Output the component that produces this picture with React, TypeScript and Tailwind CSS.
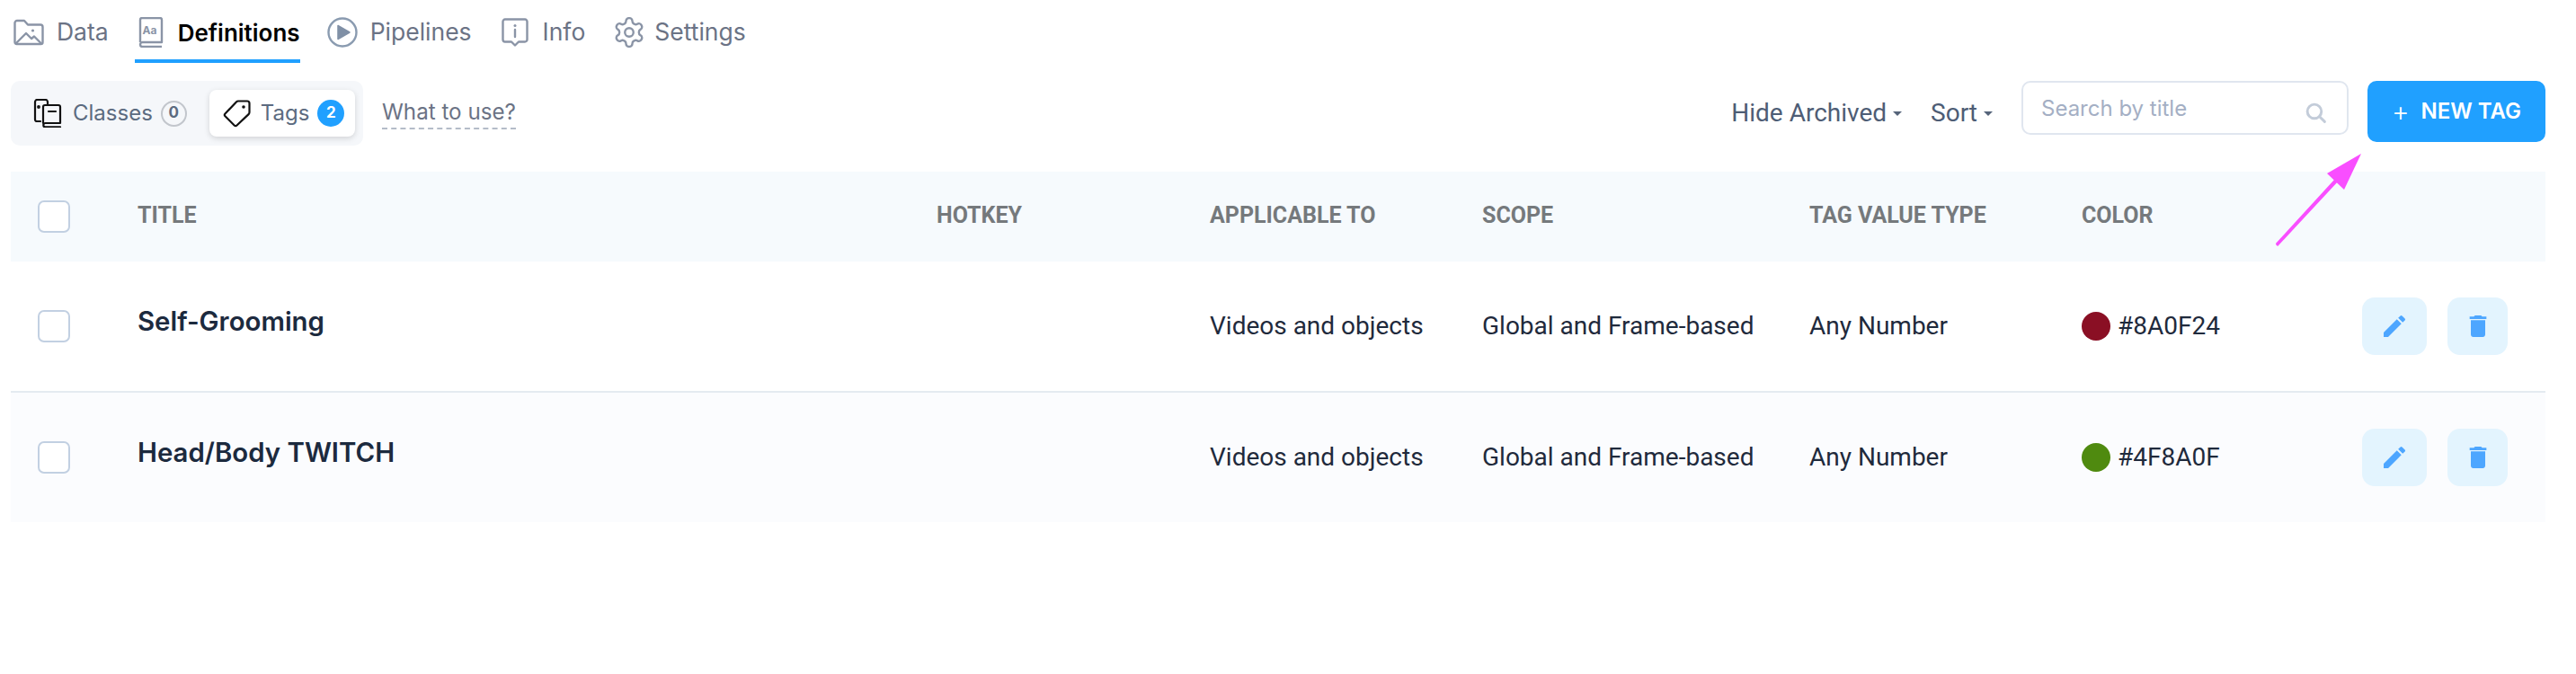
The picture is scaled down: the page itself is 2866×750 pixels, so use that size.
import React from "react";

const DataIcon = () => (
  <svg width="34" height="30" viewBox="0 0 34 30" fill="none" stroke="#8a94a6" strokeWidth="2.4" strokeLinejoin="round" strokeLinecap="round">
    <path d="M1.5 26V4.5a2.5 2.5 0 0 1 2.5-2.5h8l4 4.5h14a2.5 2.5 0 0 1 2.5 2.5V26a2 2 0 0 1-2 2H3.5a2 2 0 0 1-2-2Z" />
    <path d="M3 27l11-11 6 6 3-2.5 7 7" />
    <circle cx="21.5" cy="13" r="1.6" fill="#8a94a6" stroke="none" />
  </svg>
);
const BookIcon = () => (
  <svg width="28" height="34" viewBox="0 0 28 34" fill="none" stroke="#8a94a6" strokeWidth="2.4" strokeLinejoin="round">
    <path d="M2 28V3a2 2 0 0 1 2-2h20a2 2 0 0 1 2 2v25H4.5a2.5 2.5 0 0 0 0 5H26" />
    <text x="4.5" y="19" fontFamily="Inter, sans-serif" fontSize="12" fontWeight="700" fill="#8a94a6" stroke="none">Aa</text>
  </svg>
);
const PlayIcon = () => (
  <svg width="34" height="34" viewBox="0 0 34 34" fill="none">
    <circle cx="17" cy="17" r="15.5" stroke="#8a9bb0" strokeWidth="2.4" />
    <path d="M12 9.5 25 17 12 24.5Z" fill="#8090a6" stroke="#8090a6" strokeWidth="1.5" strokeLinejoin="round" />
  </svg>
);
const InfoIcon = () => (
  <svg width="30" height="32" viewBox="0 0 30 32" fill="none" stroke="#8a94a6" strokeWidth="2.4" strokeLinejoin="round">
    <path d="M4 1.5h22a2.5 2.5 0 0 1 2.5 2.5v20a2.5 2.5 0 0 1-2.5 2.5h-7L15 30.5 11 26.5H4A2.5 2.5 0 0 1 1.5 24V4A2.5 2.5 0 0 1 4 1.5Z" />
    <path d="M15 13v8" strokeLinecap="round" />
    <circle cx="15" cy="8.5" r="1.5" fill="#8a94a6" stroke="none" />
  </svg>
);
const GearIcon = () => (
  <svg width="38" height="38" viewBox="0 0 24 24" fill="none" stroke="#8a94a6" strokeWidth="1.5" strokeLinejoin="round" strokeLinecap="round">
    <path d="M12.22 2h-.44a2 2 0 0 0-2 2v.18a2 2 0 0 1-1 1.73l-.43.25a2 2 0 0 1-2 0l-.15-.08a2 2 0 0 0-2.73.73l-.22.38a2 2 0 0 0 .73 2.73l.15.1a2 2 0 0 1 1 1.72v.51a2 2 0 0 1-1 1.74l-.15.09a2 2 0 0 0-.73 2.73l.22.38a2 2 0 0 0 2.73.73l.15-.08a2 2 0 0 1 2 0l.43.25a2 2 0 0 1 1 1.73V20a2 2 0 0 0 2 2h.44a2 2 0 0 0 2-2v-.18a2 2 0 0 1 1-1.73l.43-.25a2 2 0 0 1 2 0l.15.08a2 2 0 0 0 2.73-.73l.22-.39a2 2 0 0 0-.73-2.73l-.15-.08a2 2 0 0 1-1-1.74v-.5a2 2 0 0 1 1-1.74l.15-.09a2 2 0 0 0 .73-2.73l-.22-.38a2 2 0 0 0-2.73-.73l-.15.08a2 2 0 0 1-2 0l-.43-.25a2 2 0 0 1-1-1.73V4a2 2 0 0 0-2-2Z" />
    <circle cx="12" cy="12" r="3" />
  </svg>
);
const ClassesIcon = () => (
  <svg width="32" height="32" viewBox="0 0 32 32" fill="none" stroke="#111" strokeWidth="2.2" strokeLinejoin="round" strokeLinecap="round">
    <path d="M8 25H4a2 2 0 0 1-2-2V3.5A2.5 2.5 0 0 1 4.5 1h9A2.5 2.5 0 0 1 16 3.5V6" />
    <path d="M11 27V9a2 2 0 0 1 2-2h15a2 2 0 0 1 2 2v18H13.5a2.2 2.2 0 0 0 0 4.4H30" />
    <path d="M17 14h8" />
    <circle cx="6" cy="9" r="0.8" fill="#111" />
  </svg>
);
const TagIcon = () => (
  <svg width="32" height="32" viewBox="0 0 32 32" fill="none" stroke="#111" strokeWidth="2.2" strokeLinejoin="round">
    <path d="M17 2.5h10a2.5 2.5 0 0 1 2.5 2.5v10a3 3 0 0 1-.9 2.1L15.5 29.5a2 2 0 0 1-2.8 0L2.5 19.3a2 2 0 0 1 0-2.8L14.9 3.4A3 3 0 0 1 17 2.5Z" />
    <circle cx="23" cy="9" r="1.8" fill="#111" stroke="none" />
  </svg>
);
const SearchIcon = () => (
  <svg width="25" height="25" viewBox="0 0 24 24" fill="none" stroke="#c3ccd9" strokeWidth="2.8" strokeLinecap="round">
    <circle cx="10.5" cy="10.5" r="7.5" />
    <path d="M16 16l5.5 5.5" />
  </svg>
);
const PencilIcon = () => (
  <svg width="32" height="32" viewBox="0 0 24 24" fill="#4da6ff">
    <path d="M3 17.25V21h3.75L17.81 9.94l-3.75-3.75L3 17.25zM20.71 7.04a1 1 0 0 0 0-1.41l-2.34-2.34a1 1 0 0 0-1.41 0l-1.83 1.83 3.75 3.75 1.83-1.83z" />
  </svg>
);
const TrashIcon = () => (
  <svg width="32" height="32" viewBox="0 0 24 24" fill="#4da6ff">
    <path d="M6 19c0 1.1.9 2 2 2h8c1.1 0 2-.9 2-2V7H6v12zM19 4h-3.5l-1-1h-5l-1 1H5v2h14V4z" />
  </svg>
);
const Caret = () => (
  <span className="ml-[7px] inline-block w-0 h-0 border-x-[5px] border-x-transparent border-t-[5px] border-t-[#56647a]" />
);

const Tab = ({ icon, label, active, gap }: { icon: React.ReactNode; label: string; active?: boolean; gap: string }) => (
  <div className={`flex h-[70px] items-center pt-[6px] border-b-4 ${gap} ${active ? "border-[#20a0ff]" : "border-transparent"}`}>
    {icon}
    <span className={active ? "text-[26px] font-semibold text-black" : "text-[26.5px] text-[#6b7385]"}>{label}</span>
  </div>
);

const Checkbox = () => <div className="h-[36px] w-[36px] rounded-[7px] border-2 border-[#c2d0e2] bg-white" />;

const gridCols = "grid grid-cols-[141px_889px_304px_303px_364px_303px_1fr] items-center";

const Head = ({ children }: { children?: React.ReactNode }) => (
  <div className="-mt-[2px] text-[25px] font-bold text-[#75797c] font-['Roboto',sans-serif]">{children}</div>
);

const Cell = ({ children }: { children: React.ReactNode }) => (
  <div className="text-[28px] text-[#1f2a3c] font-['Roboto',sans-serif]">{children}</div>
);

const Row = ({ title, dot, hex, bg }: { title: string; dot: string; hex: string; bg: string }) => (
  <div className={`${gridCols} h-[144px] ${bg}`}>
    <div className="pl-[30px]"><Checkbox /></div>
    <div className="-mt-[10px] text-[29.4px] font-semibold text-[#1c2a3e]">{title}</div>
    <div />
    <Cell>Videos and objects</Cell>
    <Cell>Global and Frame-based</Cell>
    <Cell>Any Number</Cell>
    <div className="flex items-center justify-between pr-[42px]">
      <div className="flex items-center gap-[8px]">
        <span className={`h-[32px] w-[32px] rounded-full ${dot}`} />
        <Cell>{hex}</Cell>
      </div>
      <div className="flex items-center gap-[23px]">
        <div className="flex h-[64px] w-[72px] items-center justify-center rounded-[14px] bg-[#e3f4fe]"><PencilIcon /></div>
        <div className="flex h-[64px] w-[67px] items-center justify-center rounded-[14px] bg-[#e3f4fe]"><TrashIcon /></div>
      </div>
    </div>
  </div>
);

export default function App() {
  return (
    <div className="relative min-h-[750px] w-[2866px] overflow-hidden bg-white pl-[12px] pr-[34px] font-['Inter',sans-serif]">
      <div className="flex h-[70px] items-start pl-[3px]">
        <div className="flex">
          <div className="mr-[29px]"><Tab icon={<DataIcon />} label="Data" gap="gap-[14px]" /></div>
          <div className="mr-[30px]"><Tab icon={<BookIcon />} label="Definitions" gap="gap-[16px] pl-[4px]" active /></div>
          <div className="mr-[33px]"><Tab icon={<PlayIcon />} label="Pipelines" gap="gap-[14px]" /></div>
          <div className="mr-[30px]"><Tab icon={<InfoIcon />} label="Info" gap="gap-[16px]" /></div>
          <Tab icon={<GearIcon />} label="Settings" gap="gap-[9px]" />
        </div>
      </div>

      <div className="mt-[20px] flex h-[72px] items-start justify-between">
        <div className="flex items-center">
          <div className="flex h-[72px] w-[392px] items-center rounded-[10px] bg-[#f5f7fa] pl-[25px] pr-[8px]">
            <ClassesIcon />
            <span className="ml-[12px] text-[24px] text-[#5c6b80]">Classes</span>
            <span className="ml-[9px] flex h-[29px] w-[29px] items-center justify-center rounded-full border-2 border-[#c2c6cc] text-[17px] font-bold text-[#5c6b80]">0</span>
            <div className="ml-[25px] flex h-[52px] w-[162px] items-center rounded-[8px] bg-white pl-[15px] shadow-[0_2px_6px_rgba(0,0,0,0.15)]">
              <TagIcon />
              <span className="ml-[10px] text-[24px] text-[#5c6b80]">Tags</span>
              <span className="ml-[9px] flex h-[30px] w-[30px] items-center justify-center rounded-full bg-[#20a0ff] text-[17px] font-bold text-white">2</span>
            </div>
          </div>
          <span className="ml-[21px] border-b-2 border-dashed border-[#b4bcc8] pb-[2px] pt-[2px] text-[24.2px] leading-[30px] text-[#6b7385]">What to use?</span>
        </div>

        <div className="flex items-start">
          <div className="flex h-[72px] items-center text-[28px] text-[#4e5d75] font-['Roboto',sans-serif]">
            <span>Hide Archived</span><Caret />
            <span className="ml-[32px]">Sort</span><Caret />
          </div>
          <div className="ml-[32px] flex h-[60px] w-[364px] items-center justify-between rounded-[10px] border-2 border-[#e0e6ef] bg-white pl-[20px] pr-[22px]">
            <span className="mt-[2px] text-[24px] text-[#a4afc4]">Search by title</span>
            <span className="mt-[10px]"><SearchIcon /></span>
          </div>
          <div className="ml-[21px] flex h-[68px] w-[198px] items-center justify-center gap-[13px] rounded-[10px] bg-[#20a0ff] text-white">
            <span className="text-[30px] font-light leading-none">+</span>
            <span className="text-[24px] font-semibold">NEW TAG</span>
          </div>
        </div>
      </div>

      <div className={`${gridCols} mt-[29px] h-[100px] bg-[#f6fafd]`}>
        <div className="pl-[30px]"><Checkbox /></div>
        <Head>TITLE</Head>
        <Head>HOTKEY</Head>
        <Head>APPLICABLE TO</Head>
        <Head>SCOPE</Head>
        <Head>TAG VALUE TYPE</Head>
        <Head>COLOR</Head>
      </div>
      <Row title="Self-Grooming" dot="bg-[#8a0f24]" hex="#8A0F24" bg="bg-white" />
      <div className="h-[2px] bg-[#e4ebf1]" />
      <Row title="Head/Body TWITCH" dot="bg-[#4f8a0f]" hex="#4F8A0F" bg="bg-[#fbfcfe]" />

      <svg className="absolute left-[2520px] top-[160px]" width="120" height="120" viewBox="2520 160 120 120">
        <path d="M2533 272 2599 200 M2533 273 2600 201" stroke="#f94eff" strokeWidth="3" />
        <path d="M2627 171 2589 193 2608 211Z" fill="#f94eff" />
      </svg>
    </div>
  );
}
